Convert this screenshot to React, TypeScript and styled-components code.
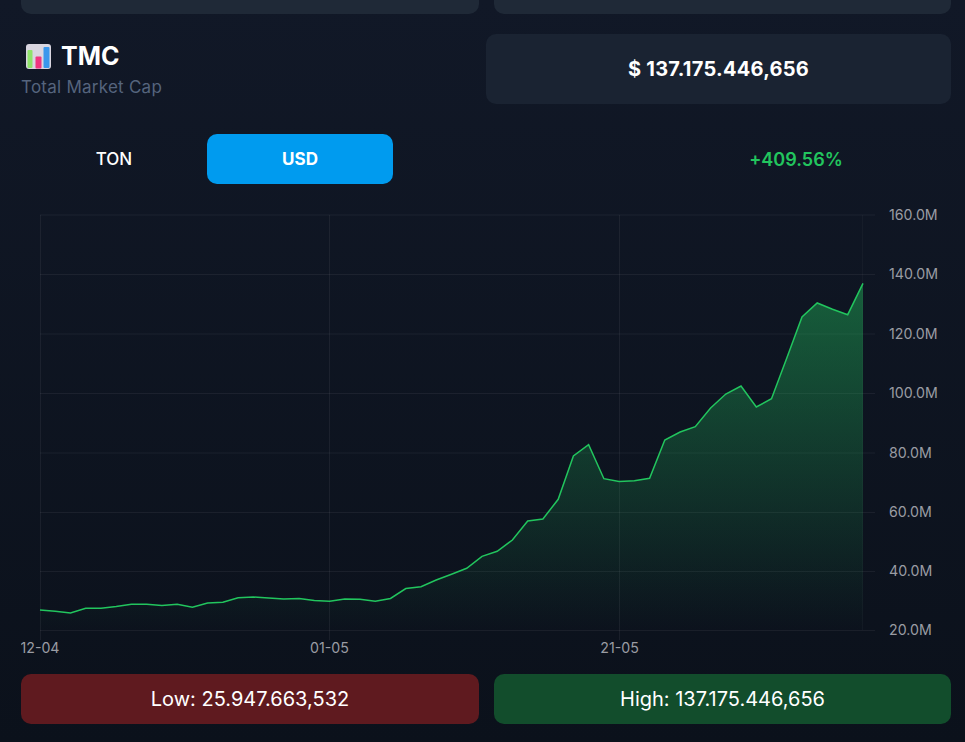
import React from "react";
import styled, { createGlobalStyle } from "styled-components";

const GlobalStyle = createGlobalStyle`
  html, body {
    margin: 0;
    padding: 0;
    background-color: #0b111b;
  }
  * {
    box-sizing: border-box;
  }
`;

// x step is one day, y values are pixel rows in the chart's coordinates
const STEP = 15.24;
const START_X = 40;
const ROWS = [
  610, 611.3, 613, 608.3, 608.2, 606.5, 604.2, 604.2, 605.5, 604.3, 607.3, 603, 602.3, 597.8, 597,
  598, 599, 598.5, 600.5, 601.2, 599, 599.2, 601.3, 598.5, 588.5, 586.7, 580, 574.3, 568.3, 556.3,
  551.3, 540, 521, 519, 499.3, 456, 444.7, 478.7, 481.5, 480.7, 478.3, 440, 432, 426.7, 408, 394,
  386, 407, 398.7, 358, 317, 303, 309.3, 314.7, 283.3,
];

const Y_TICKS = [
  { label: "160.0M", y: 215 },
  { label: "140.0M", y: 274.5 },
  { label: "120.0M", y: 334 },
  { label: "100.0M", y: 393.5 },
  { label: "80.0M", y: 453 },
  { label: "60.0M", y: 512.5 },
  { label: "40.0M", y: 571.5 },
  { label: "20.0M", y: 630.5 },
];

const X_TICKS = [
  { label: "12-04", x: 40 },
  { label: "01-05", x: 329.5 },
  { label: "21-05", x: 619.5 },
];

const linePoints = ROWS.map((y, i) => `${(START_X + STEP * i).toFixed(1)},${y}`).join(" ");
const areaPoints = `${START_X},630.5 ${linePoints} 863,630.5`;

const ChartEmoji = () => (
  <svg width="25" height="25" viewBox="0 0 25 25" aria-hidden="true">
    <rect x="0" y="0" width="25" height="25" rx="3" fill="#d9d6e0" />
    <rect x="1.5" y="6" width="5" height="18" rx="1" fill="#8fe36a" />
    <rect x="9.5" y="12.5" width="6" height="12" rx="1" fill="#f0357f" />
    <rect x="17.5" y="3" width="6" height="21" rx="1" fill="#3a97ec" />
  </svg>
);

const App = () => {
  return (
    <Page>
      <GlobalStyle />
      <TopRow>
        <TopCard />
        <TopCard />
      </TopRow>

      <Header>
        <TitleBlock>
          <TitleRow>
            <ChartEmoji />
            <Title>TMC</Title>
          </TitleRow>
          <Subtitle>Total Market Cap</Subtitle>
        </TitleBlock>
        <ValueCard>$ 137.175.446,656</ValueCard>
      </Header>

      <Controls>
        <Toggle>
          <ToggleButton>TON</ToggleButton>
          <ToggleButton active>USD</ToggleButton>
        </Toggle>
        <Change>+409.56%</Change>
      </Controls>

      <Chart viewBox="21 205 930 455" width="930" height="455">
        <defs>
          <linearGradient id="areaFill" x1="0" y1="283" x2="0" y2="630.5" gradientUnits="userSpaceOnUse">
            <stop offset="0" stopColor="#22c55e" stopOpacity="0.42" />
            <stop offset="1" stopColor="#22c55e" stopOpacity="0" />
          </linearGradient>
        </defs>
        {Y_TICKS.map((t) => (
          <line key={t.label} x1="40" x2="875" y1={t.y} y2={t.y} stroke="#ffffff" strokeOpacity="0.06" />
        ))}
        {[40.5, 329.5, 619.5].map((x) => (
          <line key={x} x1={x} x2={x} y1="215" y2="640" stroke="#ffffff" strokeOpacity="0.06" />
        ))}
        <line x1="862.5" x2="862.5" y1="215" y2="630" stroke="#ffffff" strokeOpacity="0.03" />
        <polygon points={areaPoints} fill="url(#areaFill)" />
        <polyline points={linePoints} fill="none" stroke="#22c55e" strokeWidth="1.5" />
        {Y_TICKS.map((t) => (
          <AxisText key={t.label} x="889" y={t.y + 4.5}>
            {t.label}
          </AxisText>
        ))}
        {X_TICKS.map((t) => (
          <AxisText key={t.label} x={t.x} y="653" textAnchor="middle">
            {t.label}
          </AxisText>
        ))}
      </Chart>

      <Stats>
        <Stat tone="#5f1a1f">Low: 25.947.663,532</Stat>
        <Stat tone="#124d2c">High: 137.175.446,656</Stat>
      </Stats>
    </Page>
  );
};

export default App;

const Page = styled.div`
  width: 965px;
  height: 742px;
  padding: 0 14px 0 21px;
  overflow: hidden;
  background: linear-gradient(180deg, #111827 0%, #0b111b 100%);
  font-family: Inter, "Liberation Sans", sans-serif;
  color: #ffffff;
`;

const TopRow = styled.div`
  display: grid;
  grid-template-columns: 458px 457px;
  gap: 15px;
`;

const TopCard = styled.div`
  height: 14px;
  background-color: #1f2937;
  border-radius: 0 0 10px 10px;
`;

const Header = styled.div`
  display: flex;
  justify-content: space-between;
  margin-top: 20px;
`;

const TitleBlock = styled.div`
  display: flex;
  flex-direction: column;
`;

const TitleRow = styled.div`
  display: flex;
  align-items: center;
  gap: 10px;
  padding: 10px 0 0 5px;
`;

const Title = styled.div`
  font-size: 25px;
  font-weight: 700;
  line-height: 25px;
`;

const Subtitle = styled.div`
  font-size: 17px;
  letter-spacing: 0.25px;
  line-height: 24px;
  margin-top: 6px;
  color: #55647d;
`;

const ValueCard = styled.div`
  width: 465px;
  height: 70px;
  display: flex;
  align-items: center;
  justify-content: center;
  background-color: #1a2332;
  border-radius: 10px;
  font-size: 20px;
  font-weight: 700;
  letter-spacing: 0.25px;
`;

const Controls = styled.div`
  display: grid;
  grid-template-columns: 2fr 1fr;
  align-items: center;
  margin-top: 30px;
`;

const Toggle = styled.div`
  display: flex;
`;

const ToggleButton = styled.button<{ active?: boolean }>`
  width: 186px;
  height: 50px;
  border: 0;
  border-radius: 10px;
  background-color: ${(props) => (props.active ? "#009bef" : "transparent")};
  color: #ffffff;
  font-family: inherit;
  font-size: 17px;
  font-weight: ${(props) => (props.active ? 700 : 500)};
`;

const Change = styled.div`
  text-align: center;
  font-size: 18px;
  font-weight: 600;
  color: #22c55e;
`;

const Chart = styled.svg`
  display: block;
  margin-top: 21px;
`;

const AxisText = styled.text`
  font-family: Inter, "Liberation Sans", sans-serif;
  font-size: 14.2px;
  fill: #9a9ca3;
`;

const Stats = styled.div`
  display: grid;
  grid-template-columns: 458px 457px;
  gap: 15px;
  margin-top: 14px;
`;

const Stat = styled.div<{ tone: string }>`
  height: 50px;
  display: flex;
  align-items: center;
  justify-content: center;
  border-radius: 10px;
  background-color: ${(props) => props.tone};
  font-size: 20px;
`;
